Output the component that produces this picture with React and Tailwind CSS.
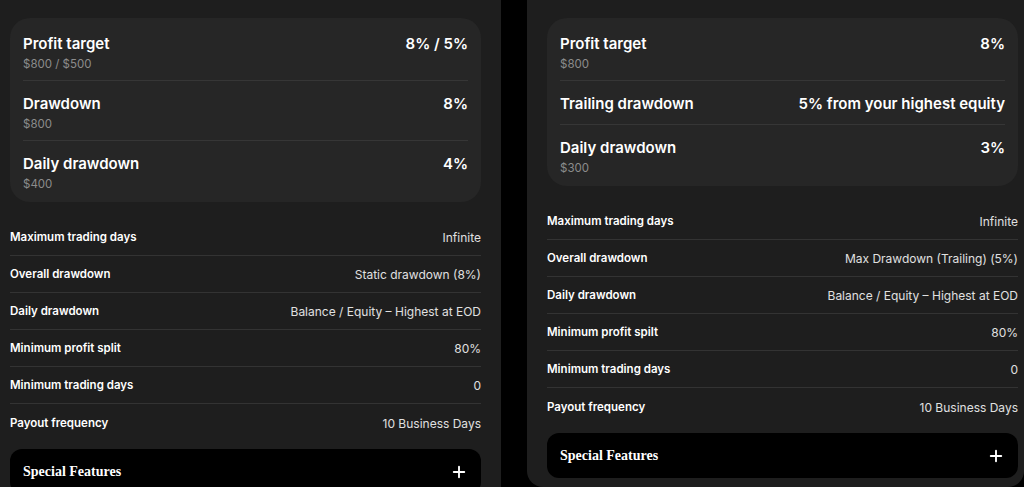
import { PlusIcon } from "lucide-react";

const plans = [
  {
    summary: [
      { label: "Profit target", value: "8% / 5%", sub: "$800 / $500" },
      { label: "Drawdown", value: "8%", sub: "$800" },
      { label: "Daily drawdown", value: "4%", sub: "$400" },
    ],
    rules: [
      ["Maximum trading days", "Infinite"],
      ["Overall drawdown", "Static drawdown (8%)"],
      ["Daily drawdown", "Balance / Equity – Highest at EOD"],
      ["Minimum profit split", "80%"],
      ["Minimum trading days", "0"],
      ["Payout frequency", "10 Business Days"],
    ],
  },
  {
    summary: [
      { label: "Profit target", value: "8%", sub: "$800" },
      { label: "Trailing drawdown", value: "5% from your highest equity" },
      { label: "Daily drawdown", value: "3%", sub: "$300" },
    ],
    rules: [
      ["Maximum trading days", "Infinite"],
      ["Overall drawdown", "Max Drawdown (Trailing) (5%)"],
      ["Daily drawdown", "Balance / Equity – Highest at EOD"],
      ["Minimum profit spilt", "80%"],
      ["Minimum trading days", "0"],
      ["Payout frequency", "10 Business Days"],
    ],
  },
];

const SummaryCard = ({ items }) => (
  <div className="rounded-[20px] bg-[#262626] px-[13px] pt-[3px] pb-[1px]">
    {items.map((item, i) => {
      const last = i === items.length - 1;
      return (
        <div
          key={item.label}
          className={`pt-[13px] ${
            item.sub ? (last ? "pb-[9px]" : "pb-[8px]") : "pb-[10px]"
          } ${last ? "" : "border-b border-[#363636]"}`}
        >
          <div className="flex items-center justify-between text-[15px] leading-5 font-semibold text-white">
            <span>{item.label}</span>
            <span>{item.value}</span>
          </div>
          {item.sub && (
            <div className="mt-[2px] text-[11.5px] leading-4 text-[#8c8c8c]">
              {item.sub}
            </div>
          )}
        </div>
      );
    })}
  </div>
);

const Rules = ({ rows }) => (
  <div className="mt-[17px]">
    {rows.map(([label, value], i) => (
      <div
        key={label}
        className={`flex h-[37px] items-center justify-between pt-[2px] ${
          i < rows.length - 1 ? "border-b border-[#333333]" : ""
        }`}
      >
        <span className="text-[11.5px] font-semibold text-white">{label}</span>
        <span className="text-[12px] text-[#e0e0e0]">{value}</span>
      </div>
    ))}
  </div>
);

const SpecialFeatures = () => (
  <div className="mt-2 flex h-[45px] items-center justify-between rounded-xl bg-black px-[13px]">
    <span
      className="text-[14px] font-bold text-white"
      style={{ fontFamily: '"Liberation Serif", serif' }}
    >
      Special Features
    </span>
    <PlusIcon className="h-[18px] w-[18px] text-white" strokeWidth={2.5} />
  </div>
);

const Plan = ({ plan, className }) => (
  <div className={`bg-[#1e1e1e] pt-[18px] ${className}`}>
    <SummaryCard items={plan.summary} />
    <Rules rows={plan.rules} />
    <SpecialFeatures />
  </div>
);

export default function App() {
  return (
    <div
      className="flex h-[487px] w-[1024px] gap-[26px] overflow-hidden bg-black"
      style={{ fontFamily: 'Inter, "Noto Sans", sans-serif' }}
    >
      <Plan plan={plans[0]} className="w-[501px] shrink-0 pr-5 pl-[10px]" />
      <Plan
        plan={plans[1]}
        className="h-[487px] flex-1 rounded-b-2xl pr-[6px] pl-5"
      />
    </div>
  );
}
